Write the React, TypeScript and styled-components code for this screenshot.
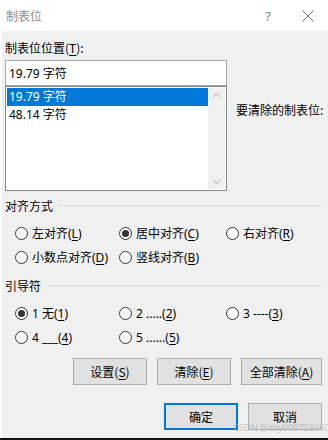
import styled, { createGlobalStyle } from 'styled-components'

const GlobalStyle = createGlobalStyle`
  html, body {
    margin: 0;
    padding: 0;
    background: #ffffff;
  }
  body {
    font-family: "Noto Sans", "Noto Sans CJK SC", sans-serif;
    font-size: 12px;
    color: #000;
  }
`

const Window = styled.div`
  width: 328px;
  height: 440px;
  display: flex;
  flex-direction: column;
  background: #ffffff;
  position: relative;
  overflow: hidden;
`

const TitleBar = styled.div`
  height: 31px;
  display: flex;
  align-items: center;
  padding-left: 6px;
  background: #ffffff;
`

const Title = styled.div`
  flex: 1;
  color: #8c8c8c;
  font-family: "Noto Sans CJK SC", sans-serif;
  font-size: 12px;
`

const TitleButton = styled.div`
  width: 40px;
  height: 31px;
  display: flex;
  align-items: center;
  justify-content: center;
  color: #8a8a8a;
  font-size: 13px;
`

const Body = styled.div`
  flex: 1;
  margin-left: 2px;
  background: #f0f0f0;
  padding: 9px 6px 0 3px;
  display: flex;
  flex-direction: column;
`

const FieldLabel = styled.div`
  height: 16px;
  line-height: 16px;
  margin-bottom: 4px;
  font-family: "Noto Sans CJK SC", sans-serif;
`

const TopArea = styled.div`
  display: grid;
  grid-template-columns: 222px 1fr;
  column-gap: 9px;
`

const Column = styled.div`
  display: flex;
  flex-direction: column;
`

const TextInput = styled.div`
  height: 26px;
  box-sizing: border-box;
  border: 1px solid #a9a9a9;
  background: #fff;
  display: flex;
  align-items: center;
  padding-left: 3px;
`

const ListBox = styled.div`
  height: 105px;
  box-sizing: border-box;
  border: 1px solid #828790;
  background: #fff;
  display: flex;
  padding: 1px;
`

const ListItems = styled.div`
  flex: 1;
  display: flex;
  flex-direction: column;
`

const ListItem = styled.div<{ $selected?: boolean }>`
  height: 18px;
  line-height: 18px;
  padding-left: 2px;
  background: ${p => (p.$selected ? '#0078d7' : 'transparent')};
  color: ${p => (p.$selected ? '#fff' : '#000')};
`

const ScrollTrack = styled.div`
  width: 17px;
  background: #f0f0f0;
  display: flex;
  flex-direction: column;
  justify-content: space-between;
  align-items: center;
  padding: 4px 0;
`

const SideLabel = styled.div`
  margin-top: 42px;
  line-height: 16px;
  white-space: nowrap;
  font-family: "Noto Sans CJK SC", sans-serif;
`

const SectionHeader = styled.div<{ $top: number }>`
  margin-top: ${p => p.$top}px;
  height: 16px;
  display: flex;
  align-items: center;
  gap: 6px;
  font-family: "Noto Sans CJK SC", sans-serif;
  &::after {
    content: '';
    flex: 1;
    height: 1px;
    background: #dadada;
  }
`

const RadioGrid = styled.div`
  margin-top: 10px;
  padding-left: 10px;
  display: grid;
  grid-template-columns: 104px 107px 1fr;
  grid-auto-rows: 20px;
  row-gap: 4px;
`

const RadioItem = styled.label`
  display: flex;
  align-items: center;
  gap: 4px;
  white-space: nowrap;
`

const RadioCircle = styled.span<{ $checked?: boolean }>`
  width: 13px;
  height: 13px;
  box-sizing: border-box;
  border: 1px solid #333;
  border-radius: 50%;
  background: #fff;
  display: flex;
  align-items: center;
  justify-content: center;
  &::after {
    content: '';
    width: 7px;
    height: 7px;
    border-radius: 50%;
    background: ${p => (p.$checked ? '#333' : 'transparent')};
  }
`

const Key = styled.span`
  text-decoration: underline;
  text-underline-offset: 2px;
`

const ButtonRow = styled.div<{ $top: number }>`
  margin-top: ${p => p.$top}px;
  display: flex;
  justify-content: flex-end;
  gap: 10px;
`

const Button = styled.div<{ $width: number; $primary?: boolean }>`
  width: ${p => p.$width}px;
  height: 27px;
  box-sizing: border-box;
  border: ${p => (p.$primary ? '2px solid #0078d7' : '1px solid #adadad')};
  background: #e1e1e1;
  display: flex;
  align-items: center;
  justify-content: center;
  font-family: "Noto Sans CJK SC", sans-serif;
`

const BottomEdge = styled.div`
  height: 2px;
  background: #111;
`

const Watermark = styled.div`
  position: absolute;
  left: 233px;
  top: 421px;
  font-size: 9.5px;
  letter-spacing: -0.2px;
  color: rgba(175, 175, 175, 0.7);
  white-space: nowrap;
`

function Chevron({ up }: { up?: boolean }) {
  return (
    <svg width="9" height="6" viewBox="0 0 9 6">
      <path
        d={up ? 'M1 5 L4.5 1.5 L8 5' : 'M1 1 L4.5 4.5 L8 1'}
        fill="none"
        stroke="#c4c4c4"
        strokeWidth="1.2"
      />
    </svg>
  )
}

function Radio({ checked, children }: { checked?: boolean; children: React.ReactNode }) {
  return (
    <RadioItem>
      <RadioCircle $checked={checked} />
      <span>{children}</span>
    </RadioItem>
  )
}

export default function App() {
  return (
    <Window>
      <GlobalStyle />
      <TitleBar>
        <Title>制表位</Title>
        <TitleButton>?</TitleButton>
        <TitleButton>
          <svg width="12" height="12" viewBox="0 0 12 12">
            <path d="M0.5 0.5 L11.5 11.5 M11.5 0.5 L0.5 11.5" stroke="#777" strokeWidth="1" />
          </svg>
        </TitleButton>
      </TitleBar>
      <Body>
        <FieldLabel>
          制表位位置(<Key>T</Key>):
        </FieldLabel>
        <TopArea>
          <Column>
            <TextInput>19.79 字符</TextInput>
            <ListBox>
              <ListItems>
                <ListItem $selected>19.79 字符</ListItem>
                <ListItem>48.14 字符</ListItem>
              </ListItems>
              <ScrollTrack>
                <Chevron up />
                <Chevron />
              </ScrollTrack>
            </ListBox>
          </Column>
          <SideLabel>要清除的制表位:</SideLabel>
        </TopArea>

        <SectionHeader $top={6}>对齐方式</SectionHeader>
        <RadioGrid>
          <Radio>左对齐(<Key>L</Key>)</Radio>
          <Radio checked>居中对齐(<Key>C</Key>)</Radio>
          <Radio>右对齐(<Key>R</Key>)</Radio>
          <Radio>小数点对齐(<Key>D</Key>)</Radio>
          <Radio>竖线对齐(<Key>B</Key>)</Radio>
        </RadioGrid>

        <SectionHeader $top={10}>引导符</SectionHeader>
        <RadioGrid>
          <Radio checked>1 无(<Key>1</Key>)</Radio>
          <Radio>2 .....(<Key>2</Key>)</Radio>
          <Radio>3 ----(<Key>3</Key>)</Radio>
          <Radio>4 ___(<Key>4</Key>)</Radio>
          <Radio>5 ......(<Key>5</Key>)</Radio>
        </RadioGrid>

        <ButtonRow $top={11}>
          <Button $width={74}>设置(<Key>S</Key>)</Button>
          <Button $width={74}>清除(<Key>E</Key>)</Button>
          <Button $width={81}>全部清除(<Key>A</Key>)</Button>
        </ButtonRow>
        <ButtonRow $top={18}>
          <Button $width={74} $primary>确定</Button>
          <Button $width={74}>取消</Button>
        </ButtonRow>
      </Body>
      <BottomEdge />
      <Watermark>CSDN @zby909758660</Watermark>
    </Window>
  )
}
